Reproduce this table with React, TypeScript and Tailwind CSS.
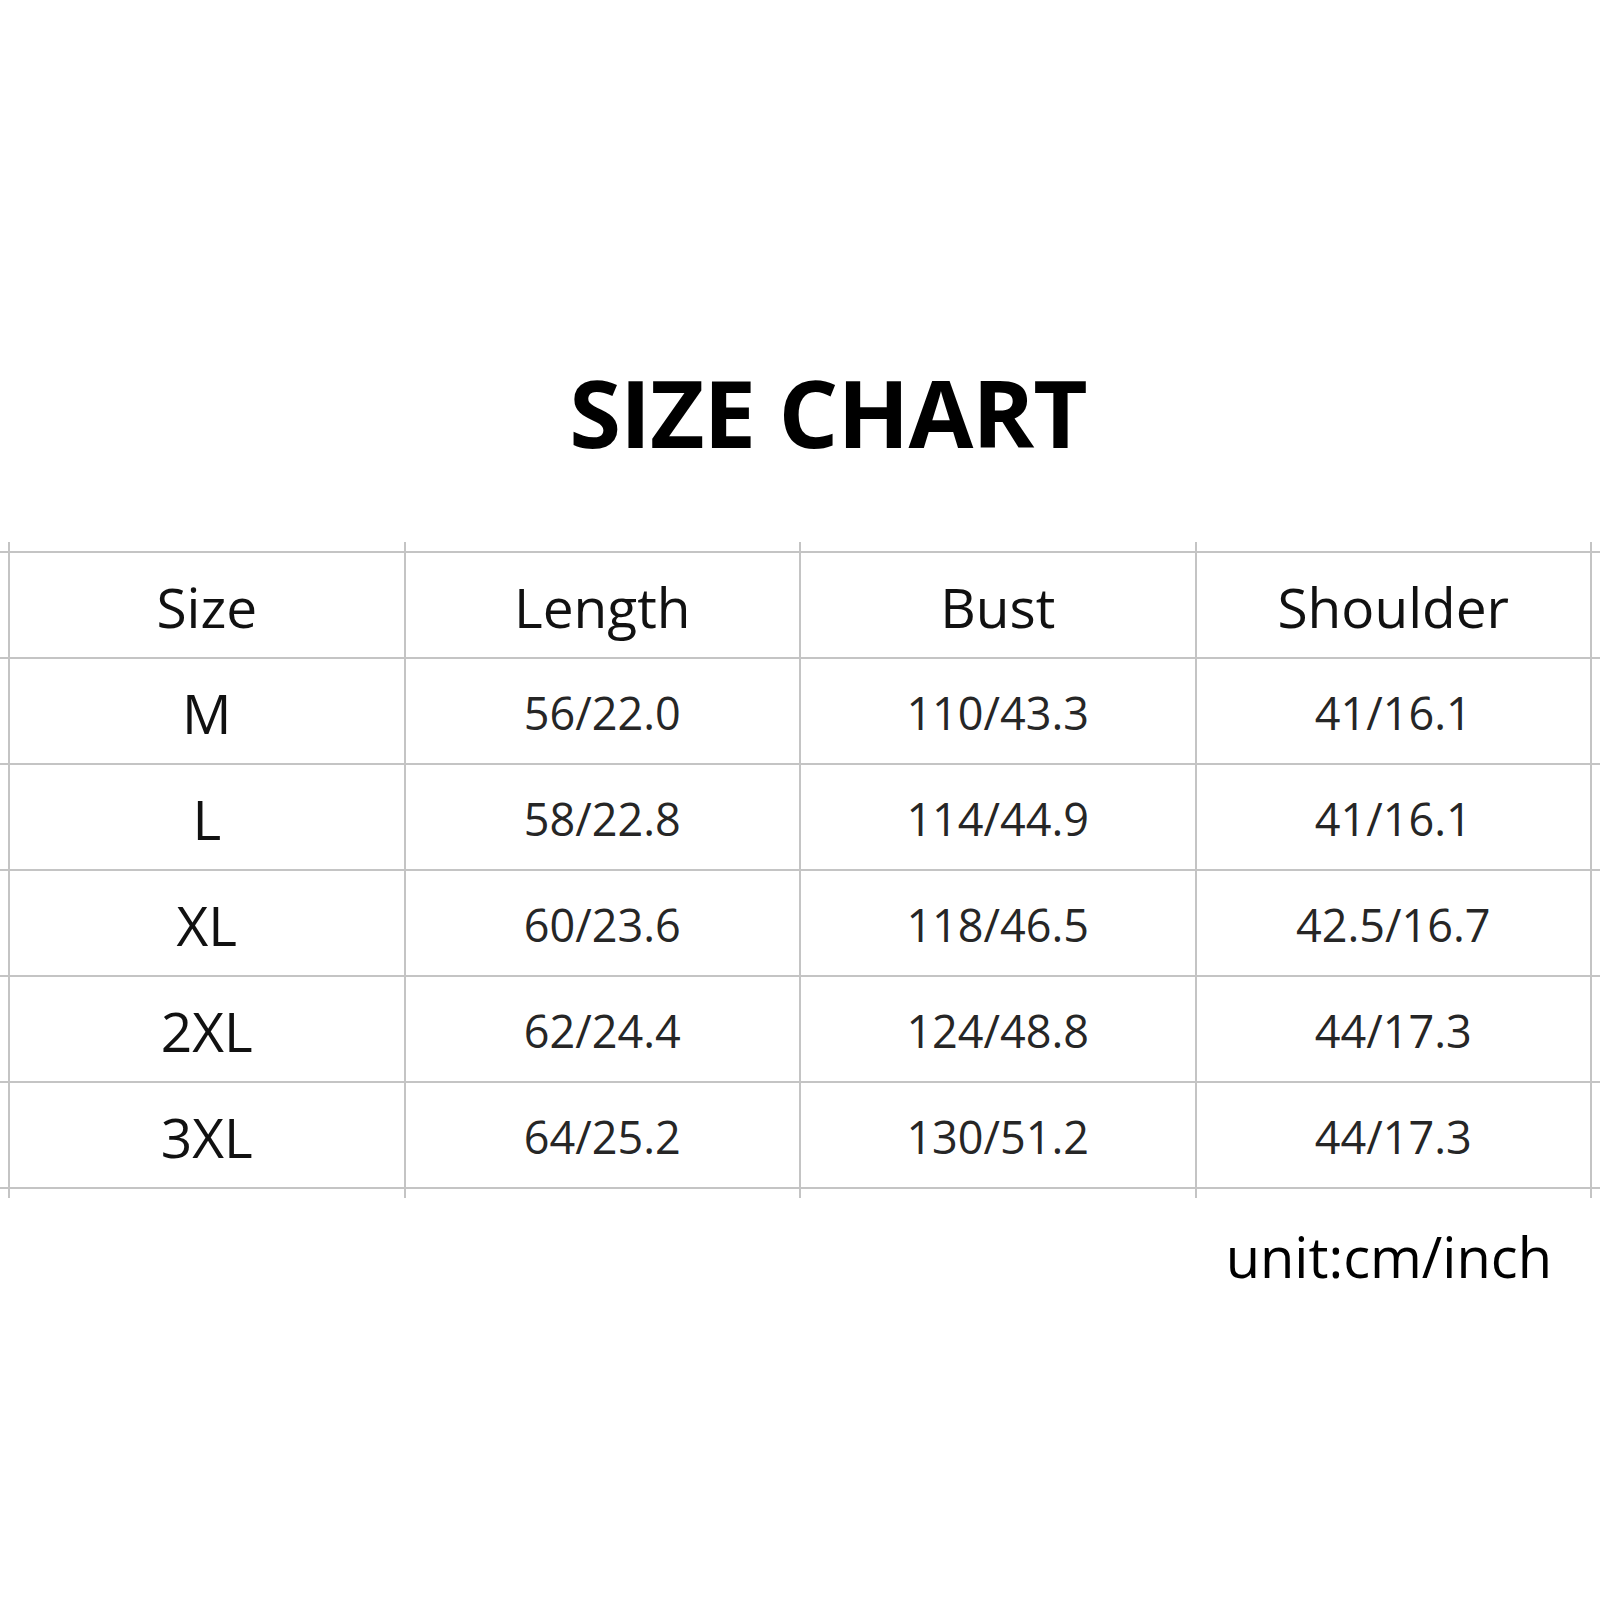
const headers = ['Size', 'Length', 'Bust', 'Shoulder'];

const rows = [
  ['M', '56/22.0', '110/43.3', '41/16.1'],
  ['L', '58/22.8', '114/44.9', '41/16.1'],
  ['XL', '60/23.6', '118/46.5', '42.5/16.7'],
  ['2XL', '62/24.4', '124/48.8', '44/17.3'],
  ['3XL', '64/25.2', '130/51.2', '44/17.3'],
];

const font = { fontFamily: '"Open Sans", "Noto Sans", sans-serif' };

function Stub() {
  // short vertical line ends above/below the grid
  return (
    <div className="h-[9px] pl-[8px]">
      <div className="grid grid-cols-4 w-[1584px] h-full border-l-2 border-[#c4c4c4]">
        {headers.map((h) => (
          <div key={h} className="border-r-2 border-[#c4c4c4]" />
        ))}
      </div>
    </div>
  );
}

function Row({ cells, header }: { cells: string[]; header?: boolean }) {
  return (
    <div className="h-[106px] border-b-2 border-[#c4c4c4] pl-[8px]">
      <div className="grid grid-cols-4 w-[1584px] h-full border-l-2 border-[#c4c4c4]">
        {cells.map((c, i) => {
          const big = header || i === 0;
          return (
            <div
              key={i}
              className={`flex items-center justify-center border-r-2 border-[#c4c4c4] pt-[4px] ${
                big ? 'text-[55px] text-[#111]' : 'text-[45px] text-[#262626]'
              }`}
            >
              {c}
            </div>
          );
        })}
      </div>
    </div>
  );
}

export default function App() {
  return (
    <div className="w-[1600px] h-[1600px] bg-white overflow-hidden" style={font}>
      <h1 className="pt-[352px] pl-[56px] text-center text-[94px] font-bold leading-[120px] text-black tracking-[-1px]">
        SIZE CHART
      </h1>
      <div className="mt-[70px]">
        <Stub />
        <div className="border-t-2 border-[#c4c4c4]">
          <Row cells={headers} header />
          {rows.map((r) => (
            <Row key={r[0]} cells={r} />
          ))}
        </div>
        <Stub />
      </div>
      <p className="text-right pr-[48px] mt-[26px] text-[56px] leading-[64px] text-black">unit:cm/inch</p>
    </div>
  );
}
